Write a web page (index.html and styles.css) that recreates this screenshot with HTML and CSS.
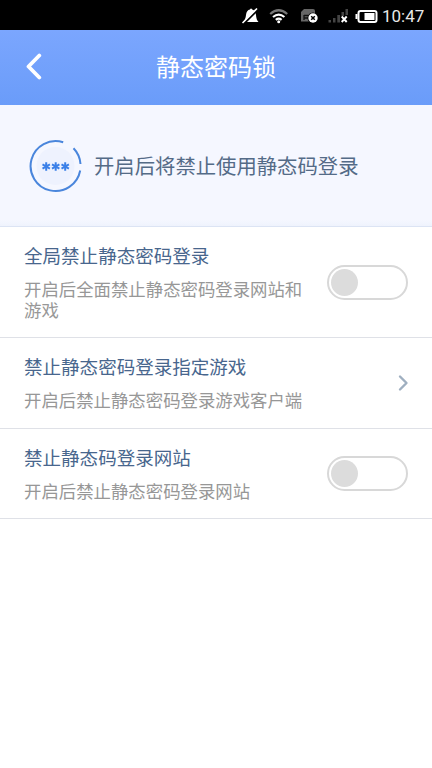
FILE: index.html
```html
<!DOCTYPE html>
<html lang="zh-CN">
<head>
<meta charset="utf-8">
<title>静态密码锁</title>
<link rel="stylesheet" href="styles.css">
</head>
<body>
<div class="status">
  <svg class="status-icons" width="138" height="30" viewBox="241 0 138 30">
    <path d="M243 22q2.500-2 3-7q.5-5 4-5.500q1-1.800 2.200 0q3.500 1 3.800 5.500q.3 5 2.500 7z" fill="#fff"/>
    <path d="M243.500 24L258 9.500" stroke="#000" stroke-width="2"/>
    <path d="M242.500 23L257 8.500" stroke="#fff" stroke-width="1.600"/>
    <g fill="none" stroke-width="2.200">
      <path d="M270.200 14q8.500-7.500 17 0" stroke="#777"/>
      <path d="M273 17q5.700-4.800 11.400 0" stroke="#fff"/>
      <path d="M275.800 19.800q2.900-2.200 5.800 0" stroke="#fff"/>
    </g>
    <circle cx="278.700" cy="21.800" r="1.500" fill="#fff"/>
    <path d="M304 9h9q2 0 2 2v10.500h-14v-9.500z" fill="#666"/>
    <path d="M304 15v5M304 15.500h4M304 18h4" stroke="#111" stroke-width="1.300"/>
    <circle cx="313" cy="18" r="5.500" fill="#000"/>
    <circle cx="313" cy="18" r="4.700" fill="#fff"/>
    <path d="M311.200 16.200l3.600 3.600m0-3.600l-3.600 3.600" stroke="#000" stroke-width="1.500"/>
    <path d="M328.500 20h2.500v2.500h-2.500zM333 18h2.500v4.500h-2.500zM337.300 15h2.700v7.500h-2.700zM341.500 12h2.500v4h-2.500zM345.500 9h2.500v6h-2.500z" fill="#444"/>
    <path d="M341.700 16.500l5 5.500m0-5.500l-5 5.500" stroke="#fff" stroke-width="1.900"/>
    <rect x="358.500" y="11" width="18" height="11" rx="2" fill="none" stroke="#fff" stroke-width="2"/>
    <path d="M355.500 14h2v5h-2zM364.500 13h10v7h-10z" fill="#fff"/>
  </svg>
  <span class="clock">10:47</span>
</div>
<header class="header">
  <svg class="back" width="18" height="28" viewBox="0 0 18 28"><path d="M15.300 3.500L4.500 14.500L15.300 25.500" fill="none" stroke="#fff" stroke-width="3.800" stroke-linecap="round" stroke-linejoin="round"/></svg>
  <h1>静态密码锁</h1>
</header>
<section class="hero">
  <svg class="badge" width="56" height="56" viewBox="0 0 56 56">
    <circle cx="27.500" cy="28" r="19" fill="#eef2fe"/>
    <g fill="none" stroke="#4a86dc" stroke-width="2">
      <path d="M35.200 4.200A25 25 0 1 0 52.200 32.500"/>
      <path d="M45.500 10.300A25 25 0 0 1 52.500 26"/>
    </g>
    <g stroke="#3b80e8" stroke-width="2">
      <path id="star" d="M18.200 24.200v8.600M14.500 26.400l7.400 4.200M21.900 26.400l-7.400 4.200"/>
      <use href="#star" x="9.500"/>
      <use href="#star" x="19"/>
    </g>
  </svg>
  <p>开启后将禁止使用静态码登录</p>
</section>
<main>
  <div class="item tall">
    <div class="copy"><h2>全局禁止静态密码登录</h2><p>开启后全面禁止静态密码登录网站和游戏</p></div>
    <div class="switch"><i></i></div>
  </div>
  <div class="item">
    <div class="copy"><h2>禁止静态密码登录指定游戏</h2><p>开启后禁止静态密码登录游戏客户端</p></div>
    <svg class="arrow" width="12" height="18" viewBox="0 0 12 18"><path d="M2 2.500L8.500 9L2 15.500" fill="none" stroke="#9fafc0" stroke-width="2.400" stroke-linecap="round" stroke-linejoin="round"/></svg>
  </div>
  <div class="item last">
    <div class="copy"><h2>禁止静态码登录网站</h2><p>开启后禁止静态密码登录网站</p></div>
    <div class="switch"><i></i></div>
  </div>
</main>
</body>
</html>
```
FILE: styles.css
```css
* { box-sizing: border-box; margin: 0; padding: 0; }
body {
  width: 432px;
  height: 768px;
  overflow: hidden;
  background: #fff;
  font-family: "Noto Sans CJK SC", sans-serif;
}
h1, h2 { font-weight: 400; white-space: nowrap; }
svg { display: block; flex: none; }
.status {
  display: flex;
  align-items: flex-start;
  height: 30px;
  padding-left: 241px;
  background: #000;
}
.clock {
  margin-left: 3px;
  color: #e8e8e8;
  font: 17px/33px Roboto, sans-serif;
}
.header {
  display: grid;
  grid-template-columns: 24px 1fr 24px;
  align-items: center;
  height: 75px;
  padding: 0 24px;
  background: linear-gradient(#7ba6fe, #6a9cf9);
}
.back { margin-top: -4px; }
.header h1 {
  margin-top: -3px;
  color: #fff;
  font-size: 24px;
  line-height: 36px;
  text-align: center;
}
.hero {
  display: flex;
  align-items: center;
  gap: 10px;
  height: 122px;
  padding-left: 28px;
  background: linear-gradient(#f5f7ff 95%, #eff3fd);
  border-bottom: 1px solid #dce4f4;
}
.hero p { margin-top: -2px; color: #546b87; font-size: 20.350px; line-height: 30px; white-space: nowrap; }
.item {
  display: flex;
  justify-content: space-between;
  align-items: center;
  height: 91px;
  padding: 0 24px;
  border-bottom: 1px solid #dfe1e7;
}
.item.tall { height: 111px; }
.item.last { height: 90px; }
.copy { width: 280px; margin-top: -4px; }
.copy h2 { color: #48668d; font-size: 18.550px; line-height: 28px; margin-bottom: 9px; }
.copy p { color: #979797; font-size: 17.400px; line-height: 21px; }
.arrow { margin-right: -2px; }
.switch {
  display: flex;
  align-items: center;
  width: 81px;
  height: 35px;
  padding-left: 2px;
  border: 2px solid #d8d8d8;
  border-radius: 18px;
}
.last .switch { margin-top: -1px; }
.switch i { width: 27px; height: 27px; border-radius: 50%; background: #dcdcdc; }
```
